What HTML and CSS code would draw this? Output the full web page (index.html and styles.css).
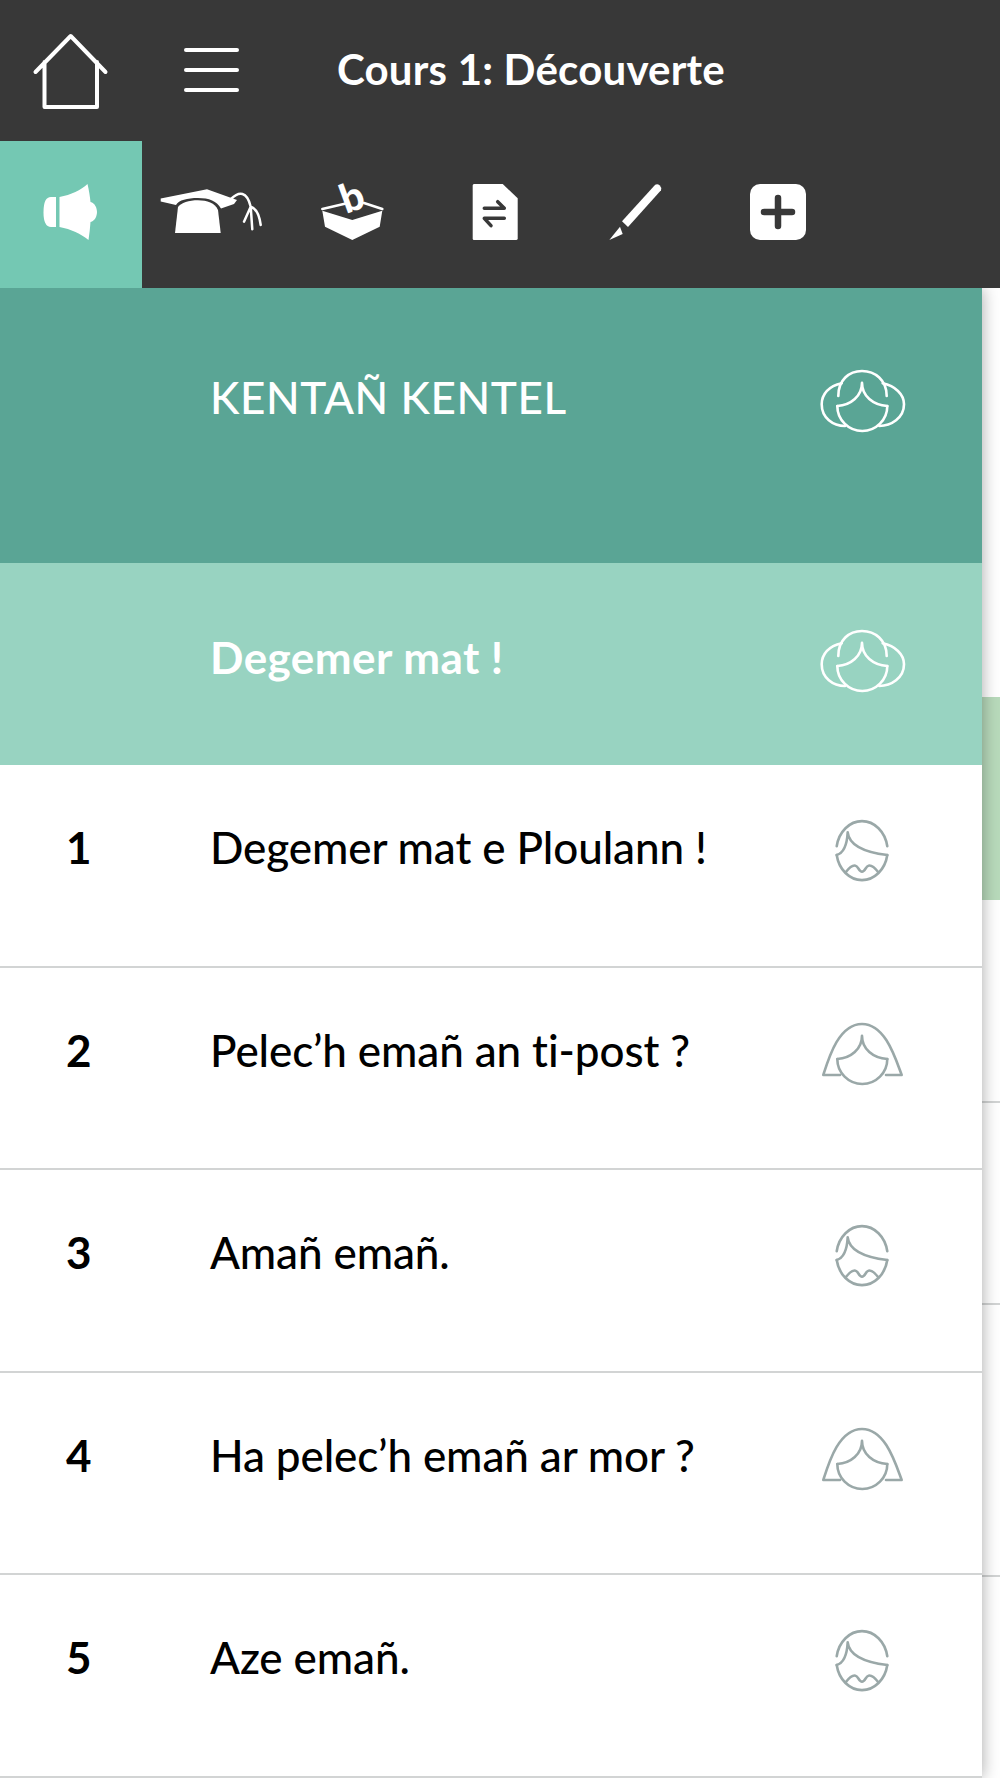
FILE: index.html
```html
<!DOCTYPE html>
<html lang="en">
  <head>
    <meta charset="UTF-8" />
    <title>Cours 1: Découverte</title>
    <link rel="stylesheet" href="styles.css">
  </head>
  <body>
    <!-- face icons, reused in the rows -->
    <svg class="defs" aria-hidden="true">
      <symbol id="face-bun" viewBox="0 0 90 66">
        <path d="M21.3 28C21.3 12 32 3 45 3C58 3 69.7 12 69.7 28" />
        <path d="M24.7 15.3C12 18 4.7 26 4.7 36.3C4.7 50 16 58 28 58" />
        <path d="M65.7 15.3C78 18 87 26 87 36.3C87 50 74 58 62.3 58" />
        <path d="M45 14.7C45 28 34 37 20.3 38M45 14.7C45 28 56 37 70.3 38" />
        <path d="M20.3 38A25 25 0 0 0 70.3 38" />
      </symbol>
      <symbol id="face-man" viewBox="0 0 90 66">
        <path d="M19.7 28.3A25.7 30.5 0 0 1 70.3 28.3" />
        <path d="M30.7 14.3C32 26 46 34 70.3 37M30.7 14.3C30 27 27 35 19.7 37" />
        <path d="M19.7 37A25.7 30.5 0 0 0 70.3 37" />
        <path d="M28.7 54.3C32 50 36 47 38.5 47.7C41 48 42 53.7 45 53.7C48 53.7 49 48 51.5 47.7C54 47 58 50 61.3 54.3" />
      </symbol>
      <symbol id="face-woman" viewBox="0 0 90 66">
        <path d="M23 54H6.3C12 36 22 3 45 3C68 3 78 36 84.7 54H69" />
        <path d="M45 14.7C45 28 34 37 20.3 38M45 14.7C45 28 56 37 70.3 38" />
        <path d="M20.3 38A25 25 0 0 0 70.3 38" />
      </symbol>
    </svg>

    <header class="topbar">
      <a class="home" href="#">
        <svg width="78" height="76" viewBox="0 0 78 76">
          <path class="line-icon" d="M3.5 39L38.7 3L73.5 39M12.5 29V74H65V29" />
        </svg>
      </a>
      <div class="burger"><span></span><span></span><span></span></div>
      <h1 class="title">Cours 1: Découverte</h1>
    </header>

    <nav class="tabs">
      <a class="tab active" href="#">
        <svg width="54" height="56" viewBox="0 0 54 56">
          <path d="M13 13H8Q.5 13 .5 28Q.5 43 8 43H13Z" />
          <path d="M16.5 13C28 11 38 6 44.5 0C46 6 47 13 47.5 18C52 19 54 24 54 28C54 32 52 37 47.5 38C47 44 46.5 50 45.5 56C38 50 28 45 16.5 43Z" />
        </svg>
      </a>
      <a class="tab" href="#">
        <svg width="104" height="48" viewBox="0 0 104 48">
          <path d="M1.7 10.5L48 1.3L78 12L75 16L62 20.5C58 13 50 10 39 10C28 10 20 12 17 17L1.7 13.5Z" />
          <path d="M16 45L19 19C22 15 30 12.3 39 12.3C48 12.3 56 15 59 22L61.7 45Z" />
          <path class="thin" d="M72 11C80 3 88 3 91.7 18.7L85 33.7M91.7 18.7L93.3 41.3M91.7 18.7C96 20 100 24 101.7 37" />
        </svg>
      </a>
      <a class="tab" href="#">
        <svg width="64" height="56" viewBox="0 0 64 56">
          <path d="M1.3 26.7L31.3 36L61.3 26.7L58.7 42.7L31.3 56L4 42.7Z" />
          <path class="thin" d="M1.3 25L27 19M43 19L61.3 25" />
          <text class="ballot-b" x="32" y="27" transform="rotate(-20 31 16)">b</text>
        </svg>
      </a>
      <a class="tab" href="#">
        <svg width="46" height="56" viewBox="0 0 46 56">
          <path d="M.7 1.5Q.7 0 2 0H30.7L45.7 14.3V54.5Q45.7 56 44 56H2Q.7 56 .7 54.5Z" />
          <path class="dark-line" d="M12.3 24.3H32.3L25.7 17.7M32.3 34.3H12.3L19 41.7" />
        </svg>
      </a>
      <a class="tab" href="#">
        <svg width="54" height="56" viewBox="0 0 54 56">
          <path d="M46.2 .8Q48.5 -.5 50.8 1.5Q53 3.8 52 6.2L19 43L13 37.2Z" />
          <path d="M11 42.7L13.7 50L.3 56Z" />
        </svg>
      </a>
      <a class="tab" href="#">
        <svg width="56" height="56" viewBox="0 0 56 56">
          <rect width="56" height="56" rx="10" />
          <path class="dark-line wide" d="M28 14V42M14 28H42" />
        </svg>
      </a>
    </nav>

    <div class="content">
      <main class="lessons">
        <div class="row chapter">
          <span class="num"></span>
          <span class="label">KENTAÑ KENTEL</span>
          <svg class="face"><use href="#face-bun" /></svg>
        </div>
        <div class="row intro">
          <span class="num"></span>
          <span class="label">Degemer mat !</span>
          <svg class="face"><use href="#face-bun" /></svg>
        </div>
        <div class="row">
          <span class="num">1</span>
          <span class="label">Degemer mat e Ploulann !</span>
          <svg class="face"><use href="#face-man" /></svg>
        </div>
        <div class="row">
          <span class="num">2</span>
          <span class="label">Pelec’h emañ an ti-post ?</span>
          <svg class="face"><use href="#face-woman" /></svg>
        </div>
        <div class="row">
          <span class="num">3</span>
          <span class="label">Amañ emañ.</span>
          <svg class="face"><use href="#face-man" /></svg>
        </div>
        <div class="row">
          <span class="num">4</span>
          <span class="label">Ha pelec’h emañ ar mor ?</span>
          <svg class="face"><use href="#face-woman" /></svg>
        </div>
        <div class="row">
          <span class="num">5</span>
          <span class="label">Aze emañ.</span>
          <svg class="face"><use href="#face-man" /></svg>
        </div>
      </main>

      <!-- the next column, mostly hidden behind the list -->
      <aside class="behind">
        <div class="behind-current"></div>
        <div class="behind-row"></div>
        <div class="behind-row"></div>
        <div class="behind-row last"></div>
      </aside>
    </div>
  </body>
</html>
```

FILE: styles.css
```css
/* Basic styles */
body {
  margin: 0;
  height: 1778px;
  overflow: hidden;
  background-color: #ffffff;
  font-family: "Lato", "Liberation Sans", sans-serif;
}

.defs {
  display: block;
  width: 0;
  height: 0;
}

/* Top bar */
.topbar {
  display: flex;
  align-items: center;
  height: 141px;
  background-color: #383838;
}

.home {
  display: flex;
  justify-content: center;
  width: 142px;
}

.line-icon {
  fill: none;
  stroke: #ffffff;
  stroke-width: 4;
  stroke-linecap: round;
  stroke-linejoin: round;
}

.burger {
  display: flex;
  flex-direction: column;
  gap: 16px;
  width: 55px;
  margin-left: 42px;
  margin-bottom: 1px;
}

.burger span {
  height: 4px;
  border-radius: 2px;
  background-color: #ffffff;
}

.title {
  margin: 0 0 4px 98px;
  color: #ffffff;
  font-size: 42px;
  font-weight: 700;
  letter-spacing: 0.2px;
}

/* Icon tabs */
.tabs {
  position: relative;
  z-index: 2;
  display: flex;
  height: 147px;
  background-color: #383838;
}

.tab {
  display: flex;
  justify-content: center;
  align-items: center;
  flex: 0 0 141.67px;
  box-sizing: border-box;
  padding: 0 2px 6px 0;
}

.tab svg {
  overflow: visible;
  fill: #ffffff;
}

.tab.active {
  background-color: #74c8b3;
}

.thin {
  fill: none;
  stroke: #ffffff;
  stroke-width: 2.5;
  stroke-linecap: round;
}

.ballot-b {
  font-family: "Lato", sans-serif;
  font-size: 40px;
  font-weight: 900;
  text-anchor: middle;
}

.dark-line {
  fill: none;
  stroke: #383838;
  stroke-width: 3.5;
  stroke-linecap: round;
  stroke-linejoin: round;
}

.dark-line.wide {
  stroke-width: 6.5;
}

/* Lesson list */
.content {
  display: flex;
}

.lessons {
  position: relative;
  z-index: 1;
  flex: 0 0 982px;
  box-shadow: 0 0 16px rgba(0, 0, 0, 0.35);
  background-color: #ffffff;
}

.row {
  display: flex;
  align-items: flex-start;
  box-sizing: border-box;
  height: 202.5px;
  padding-top: 55px;
  border-bottom: 2px solid #d2d4d4;
  color: #000000;
  font-size: 44px;
  font-weight: 500;
  line-height: 54px;
  letter-spacing: -0.1px;
}

.num {
  flex: 0 0 144px;
  margin-left: 66px;
  font-weight: 700;
}

.label {
  flex: 1;
}

.face {
  flex: 0 0 90px;
  height: 66px;
  margin: -2px 75px 0 0;
  fill: none;
  stroke: #9aa8a8;
  stroke-width: 2.6;
  stroke-linecap: round;
  stroke-linejoin: round;
}

.chapter {
  height: 275px;
  padding-top: 82px;
  border-bottom: none;
  background-color: #5aa595;
  color: #ffffff;
  letter-spacing: 0.6px;
}

.intro {
  height: 202px;
  padding-top: 67px;
  border-bottom: none;
  background-color: #98d3c1;
  color: #ffffff;
  letter-spacing: 0.45px;
}

.intro .label {
  font-weight: 700;
}

.chapter .face,
.intro .face {
  stroke: #ffffff;
}

/* Column behind the list */
.behind {
  flex: 1;
  padding-top: 409px;
}

.behind-current {
  height: 203px;
  background-color: #b8dabb;
}

.behind-row {
  box-sizing: border-box;
  height: 202.5px;
  border-bottom: 2px solid #d2d4d4;
}

.behind-row.last {
  height: 272px;
}
```
